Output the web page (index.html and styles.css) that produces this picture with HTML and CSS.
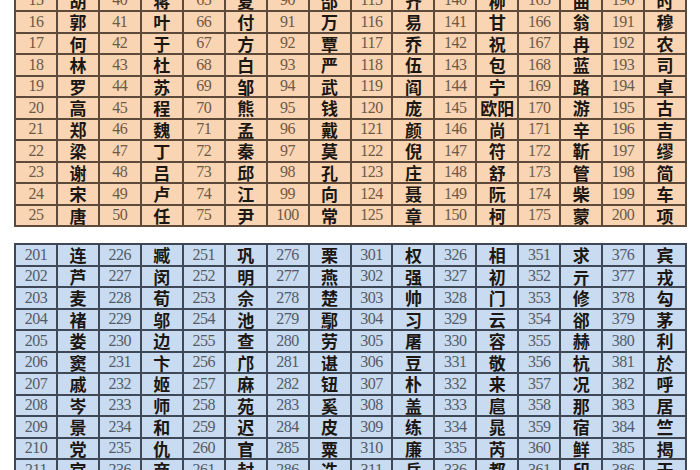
FILE: index.html
```html
<!DOCTYPE html>
<html lang="zh-CN">
<head>
<meta charset="utf-8">
<title>姓氏排名</title>
<link rel="stylesheet" href="styles.css">
</head>
<body>
<main class="page">
  <section class="sheet sheet--orange">
    <span class="num">15</span><span class="name">胡</span><span class="num">40</span><span class="name">蒋</span><span class="num">65</span><span class="name">夏</span><span class="num">90</span><span class="name">邵</span><span class="num">115</span><span class="name">齐</span><span class="num">140</span><span class="name">柳</span><span class="num">165</span><span class="name">曲</span><span class="num">190</span><span class="name">时</span>
    <span class="num">16</span><span class="name">郭</span><span class="num">41</span><span class="name">叶</span><span class="num">66</span><span class="name">付</span><span class="num">91</span><span class="name">万</span><span class="num">116</span><span class="name">易</span><span class="num">141</span><span class="name">甘</span><span class="num">166</span><span class="name">翁</span><span class="num">191</span><span class="name">穆</span>
    <span class="num">17</span><span class="name">何</span><span class="num">42</span><span class="name">于</span><span class="num">67</span><span class="name">方</span><span class="num">92</span><span class="name">覃</span><span class="num">117</span><span class="name">乔</span><span class="num">142</span><span class="name">祝</span><span class="num">167</span><span class="name">冉</span><span class="num">192</span><span class="name">农</span>
    <span class="num">18</span><span class="name">林</span><span class="num">43</span><span class="name">杜</span><span class="num">68</span><span class="name">白</span><span class="num">93</span><span class="name">严</span><span class="num">118</span><span class="name">伍</span><span class="num">143</span><span class="name">包</span><span class="num">168</span><span class="name">蓝</span><span class="num">193</span><span class="name">司</span>
    <span class="num">19</span><span class="name">罗</span><span class="num">44</span><span class="name">苏</span><span class="num">69</span><span class="name">邹</span><span class="num">94</span><span class="name">武</span><span class="num">119</span><span class="name">阎</span><span class="num">144</span><span class="name">宁</span><span class="num">169</span><span class="name">路</span><span class="num">194</span><span class="name">卓</span>
    <span class="num">20</span><span class="name">高</span><span class="num">45</span><span class="name">程</span><span class="num">70</span><span class="name">熊</span><span class="num">95</span><span class="name">钱</span><span class="num">120</span><span class="name">庞</span><span class="num">145</span><span class="name">欧阳</span><span class="num">170</span><span class="name">游</span><span class="num">195</span><span class="name">古</span>
    <span class="num">21</span><span class="name">郑</span><span class="num">46</span><span class="name">魏</span><span class="num">71</span><span class="name">孟</span><span class="num">96</span><span class="name">戴</span><span class="num">121</span><span class="name">颜</span><span class="num">146</span><span class="name">尚</span><span class="num">171</span><span class="name">辛</span><span class="num">196</span><span class="name">吉</span>
    <span class="num">22</span><span class="name">梁</span><span class="num">47</span><span class="name">丁</span><span class="num">72</span><span class="name">秦</span><span class="num">97</span><span class="name">莫</span><span class="num">122</span><span class="name">倪</span><span class="num">147</span><span class="name">符</span><span class="num">172</span><span class="name">靳</span><span class="num">197</span><span class="name">缪</span>
    <span class="num">23</span><span class="name">谢</span><span class="num">48</span><span class="name">吕</span><span class="num">73</span><span class="name">邱</span><span class="num">98</span><span class="name">孔</span><span class="num">123</span><span class="name">庄</span><span class="num">148</span><span class="name">舒</span><span class="num">173</span><span class="name">管</span><span class="num">198</span><span class="name">简</span>
    <span class="num">24</span><span class="name">宋</span><span class="num">49</span><span class="name">卢</span><span class="num">74</span><span class="name">江</span><span class="num">99</span><span class="name">向</span><span class="num">124</span><span class="name">聂</span><span class="num">149</span><span class="name">阮</span><span class="num">174</span><span class="name">柴</span><span class="num">199</span><span class="name">车</span>
    <span class="num">25</span><span class="name">唐</span><span class="num">50</span><span class="name">任</span><span class="num">75</span><span class="name">尹</span><span class="num">100</span><span class="name">常</span><span class="num">125</span><span class="name">章</span><span class="num">150</span><span class="name">柯</span><span class="num">175</span><span class="name">蒙</span><span class="num">200</span><span class="name">项</span>
  </section>
  <section class="sheet sheet--blue">
    <span class="num">201</span><span class="name">连</span><span class="num">226</span><span class="name">臧</span><span class="num">251</span><span class="name">巩</span><span class="num">276</span><span class="name">栗</span><span class="num">301</span><span class="name">权</span><span class="num">326</span><span class="name">相</span><span class="num">351</span><span class="name">求</span><span class="num">376</span><span class="name">宾</span>
    <span class="num">202</span><span class="name">芦</span><span class="num">227</span><span class="name">闵</span><span class="num">252</span><span class="name">明</span><span class="num">277</span><span class="name">燕</span><span class="num">302</span><span class="name">强</span><span class="num">327</span><span class="name">初</span><span class="num">352</span><span class="name">亓</span><span class="num">377</span><span class="name">戎</span>
    <span class="num">203</span><span class="name">麦</span><span class="num">228</span><span class="name">荀</span><span class="num">253</span><span class="name">佘</span><span class="num">278</span><span class="name">楚</span><span class="num">303</span><span class="name">帅</span><span class="num">328</span><span class="name">门</span><span class="num">353</span><span class="name">修</span><span class="num">378</span><span class="name">勾</span>
    <span class="num">204</span><span class="name">褚</span><span class="num">229</span><span class="name">邬</span><span class="num">254</span><span class="name">池</span><span class="num">279</span><span class="name">鄢</span><span class="num">304</span><span class="name">习</span><span class="num">329</span><span class="name">云</span><span class="num">354</span><span class="name">郤</span><span class="num">379</span><span class="name">茅</span>
    <span class="num">205</span><span class="name">娄</span><span class="num">230</span><span class="name">边</span><span class="num">255</span><span class="name">查</span><span class="num">280</span><span class="name">劳</span><span class="num">305</span><span class="name">屠</span><span class="num">330</span><span class="name">容</span><span class="num">355</span><span class="name">赫</span><span class="num">380</span><span class="name">利</span>
    <span class="num">206</span><span class="name">窦</span><span class="num">231</span><span class="name">卞</span><span class="num">256</span><span class="name">邝</span><span class="num">281</span><span class="name">谌</span><span class="num">306</span><span class="name">豆</span><span class="num">331</span><span class="name">敬</span><span class="num">356</span><span class="name">杭</span><span class="num">381</span><span class="name">於</span>
    <span class="num">207</span><span class="name">戚</span><span class="num">232</span><span class="name">姬</span><span class="num">257</span><span class="name">麻</span><span class="num">282</span><span class="name">钮</span><span class="num">307</span><span class="name">朴</span><span class="num">332</span><span class="name">来</span><span class="num">357</span><span class="name">况</span><span class="num">382</span><span class="name">呼</span>
    <span class="num">208</span><span class="name">岑</span><span class="num">233</span><span class="name">师</span><span class="num">258</span><span class="name">苑</span><span class="num">283</span><span class="name">奚</span><span class="num">308</span><span class="name">盖</span><span class="num">333</span><span class="name">扈</span><span class="num">358</span><span class="name">那</span><span class="num">383</span><span class="name">居</span>
    <span class="num">209</span><span class="name">景</span><span class="num">234</span><span class="name">和</span><span class="num">259</span><span class="name">迟</span><span class="num">284</span><span class="name">皮</span><span class="num">309</span><span class="name">练</span><span class="num">334</span><span class="name">晁</span><span class="num">359</span><span class="name">宿</span><span class="num">384</span><span class="name">竺</span>
    <span class="num">210</span><span class="name">党</span><span class="num">235</span><span class="name">仇</span><span class="num">260</span><span class="name">官</span><span class="num">285</span><span class="name">粟</span><span class="num">310</span><span class="name">廉</span><span class="num">335</span><span class="name">芮</span><span class="num">360</span><span class="name">鲜</span><span class="num">385</span><span class="name">揭</span>
    <span class="num">211</span><span class="name">宫</span><span class="num">236</span><span class="name">商</span><span class="num">261</span><span class="name">封</span><span class="num">286</span><span class="name">冼</span><span class="num">311</span><span class="name">岳</span><span class="num">336</span><span class="name">都</span><span class="num">361</span><span class="name">印</span><span class="num">386</span><span class="name">干</span>
  </section>
</main>
</body>
</html>
```

FILE: styles.css
```css
html, body {
  margin: 0;
  padding: 0;
  background: #ffffff;
  overflow: hidden;
}

.page {
  width: 700px;
  height: 470px;
  overflow: hidden;
  padding: 0 13px 0 14px;
  box-sizing: border-box;
}

.sheet {
  display: grid;
  grid-template-columns: repeat(16, 1fr);
  grid-auto-rows: 19.5px;
  gap: 2px;
  padding: 2px;
  width: 673px;
  box-sizing: border-box;
}

.sheet--orange {
  margin-top: -11.5px;
  background: #5e4a3a;
}

.sheet--blue {
  margin-top: 16px;
  background: #3f4856;
}

.sheet > span {
  display: flex;
  align-items: center;
  justify-content: center;
  overflow: hidden;
  white-space: nowrap;
  line-height: 1;
}

.sheet--orange > span {
  background: #f9d5b4;
}

.sheet--blue > span {
  background: #c9dbf0;
}

.num {
  font-family: "Liberation Serif", "Times New Roman", serif;
  font-size: 16px;
  letter-spacing: -0.5px;
}

.sheet--orange .num {
  color: #6e5947;
}

.sheet--blue .num {
  color: #525b69;
}

.name {
  font-family: "Noto Sans CJK SC", sans-serif;
  font-weight: 700;
  font-size: 17px;
  color: #1c1712;
}
```
